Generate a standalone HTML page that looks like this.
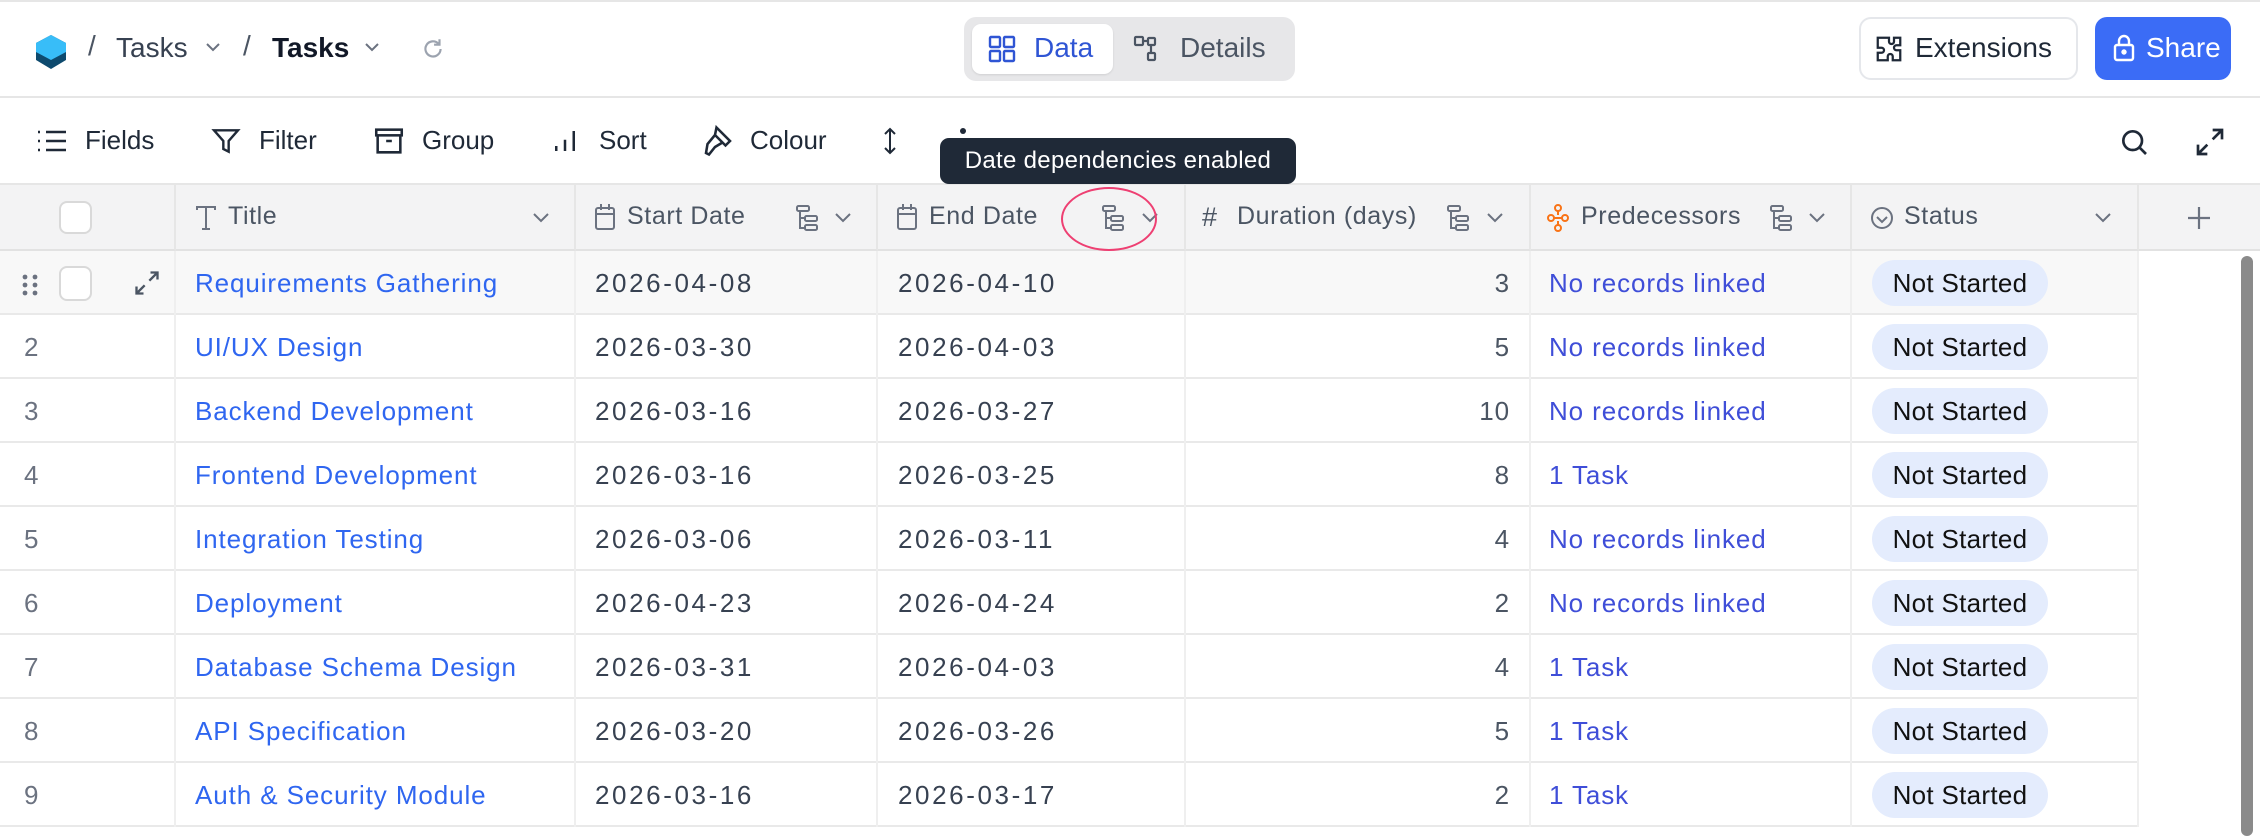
<!DOCTYPE html>
<html><head><meta charset="utf-8"><style>
*{box-sizing:border-box;margin:0;padding:0}
body{width:2260px;height:832px;overflow:hidden;background:#fff;font-family:"Liberation Sans",sans-serif;position:relative;color:#1f2937}
.a{position:absolute;white-space:nowrap}
.hl{position:absolute;left:0;width:2260px;height:2px;background:#e6e6e6}
.tb{font-size:26px;color:#1f2937;top:125px}
.ic{position:absolute}
.th{position:absolute;top:185px;height:66px;background:#f3f3f4;border-right:2px solid #e6e6e6;border-bottom:2px solid #e2e2e2}
.thl{position:absolute;top:202px;font-size:25px;color:#4b5563;letter-spacing:.6px}
.row{position:absolute;left:0;width:2139px;height:64px;border-bottom:2px solid #e9e9e9}
.cell{position:absolute;top:0;height:64px;border-right:2px solid #efefef}
.t{position:absolute;top:17px;font-size:26px;letter-spacing:.9px}
.num{color:#6b7280;left:24px}
.title{color:#2f66f0;left:195px}
.d{color:#374151;letter-spacing:2.6px}
.pred{color:#3f4ed8;left:1549px}
.pill{position:absolute;left:1872px;top:9px;width:176px;height:46px;border-radius:23px;background:#e4ecfd;font-size:26px;color:#111;text-align:center;line-height:46px;letter-spacing:.3px}
</style></head><body>
<div class="hl" style="top:0"></div>
<svg class="ic" style="left:34px;top:34px" width="34" height="36" viewBox="0 0 34 36"><path d="M17 1 L32 9 V26 L17 35 L2 26 V9Z" fill="#0e4a6e"/><path d="M17 1 L32 9 V18 L17 26 L2 18 V9Z" fill="#38bdf8"/></svg>
<div class="a" style="left:88px;top:30px;font-size:28px;color:#4b5563">/</div>
<div class="a" style="left:116px;top:32px;font-size:28px;color:#374151">Tasks</div>
<svg class="ic" style="left:205px;top:42px" width="16" height="10"><path d="M2 2l6 6 6-6" stroke="#6b7280" stroke-width="2" fill="none"/></svg>
<div class="a" style="left:243px;top:30px;font-size:28px;color:#4b5563">/</div>
<div class="a" style="left:272px;top:32px;font-size:28px;color:#111827;font-weight:bold">Tasks</div>
<svg class="ic" style="left:364px;top:42px" width="16" height="10"><path d="M2 2l6 6 6-6" stroke="#6b7280" stroke-width="2" fill="none"/></svg>
<svg class="ic" style="left:420px;top:36px" width="26" height="26" viewBox="0 0 24 24"><path d="M19 12a7 7 0 1 1-2-5" stroke="#9ca3af" stroke-width="2" fill="none"/><path d="M18 3v5h-5" stroke="#9ca3af" stroke-width="2" fill="none"/></svg>
<div class="a" style="left:964px;top:17px;width:331px;height:64px;background:#e7e7e9;border-radius:12px"></div>
<div class="a" style="left:972px;top:24px;width:141px;height:50px;background:#fff;border-radius:9px;box-shadow:0 1px 2px rgba(0,0,0,.1)"></div>
<svg class="ic" style="left:988px;top:35px" width="28" height="28" viewBox="0 0 28 28" fill="none" stroke="#2f55d4" stroke-width="2.4"><rect x="2" y="2" width="10" height="10" rx="1"/><rect x="16" y="2" width="10" height="10" rx="1"/><rect x="2" y="16" width="10" height="10" rx="1"/><rect x="16" y="16" width="10" height="10" rx="1"/></svg>
<div class="a" style="left:1034px;top:32px;font-size:28px;color:#2f55d4">Data</div>
<svg class="ic" style="left:1133px;top:35px" width="28" height="28" viewBox="0 0 28 28" fill="none" stroke="#4b5563" stroke-width="2.2"><rect x="2" y="2" width="8" height="8" rx="1"/><rect x="15" y="3" width="7" height="7" rx="1"/><rect x="15" y="18" width="7" height="7" rx="1"/><path d="M10 6h5M18 10v8"/></svg>
<div class="a" style="left:1180px;top:32px;font-size:28px;color:#4b5563">Details</div>
<div class="a" style="left:1859px;top:17px;width:219px;height:63px;border:2px solid #e5e7eb;border-radius:12px;background:#fff"></div>
<svg class="ic" style="left:1874px;top:34px" width="30" height="30" viewBox="0 0 24 24" fill="none" stroke="#1f2937" stroke-width="1.8"><path d="M9 3h3v3a2 2 0 1 0 4 0V3h5v6h-3a2 2 0 1 0 0 4h3v8h-6v-3a2 2 0 1 0-4 0v3H3v-6h3a2 2 0 1 0 0-4H3V3z"/></svg>
<div class="a" style="left:1915px;top:32px;font-size:28px;color:#1f2937">Extensions</div>
<div class="a" style="left:2095px;top:17px;width:136px;height:63px;background:#3b6cf6;border-radius:12px"></div>
<svg class="ic" style="left:2113px;top:34px" width="22" height="28" viewBox="0 0 22 28" fill="none" stroke="#fff" stroke-width="2.4"><rect x="2" y="11" width="18" height="15" rx="2"/><path d="M6 11V7a5 5 0 0 1 10 0v4"/><circle cx="11" cy="18" r="1.5" fill="#fff"/></svg>
<div class="a" style="left:2146px;top:32px;font-size:28px;color:#fff">Share</div>
<div class="hl" style="top:96px"></div>
<svg class="ic" style="left:36px;top:128px" width="32" height="26" viewBox="0 0 32 26" stroke="#1f2937" stroke-width="2.4"><path d="M2 4h2M10 4h20M2 13h2M10 13h20M2 22h2M10 22h20"/></svg>
<div class="a tb" style="left:85px">Fields</div>
<svg class="ic" style="left:210px;top:125px" width="32" height="32" viewBox="0 0 24 24" fill="none" stroke="#1f2937" stroke-width="1.8"><path d="M3 4h18l-7 8v8l-4-2v-6z"/></svg>
<div class="a tb" style="left:259px">Filter</div>
<svg class="ic" style="left:372px;top:124px" width="34" height="34" viewBox="0 0 24 24" fill="none" stroke="#1f2937" stroke-width="1.8"><rect x="3" y="4" width="18" height="4"/><path d="M4 8v12h16V8M10 12h4"/></svg>
<div class="a tb" style="left:422px">Group</div>
<svg class="ic" style="left:550px;top:126px" width="30" height="30" viewBox="0 0 24 24" stroke="#1f2937" stroke-width="2"><path d="M5 20v-4M12 20v-9M19 20V4"/></svg>
<div class="a tb" style="left:599px">Sort</div>
<svg class="ic" style="left:700px;top:123px" width="36" height="36" viewBox="0 0 24 24" fill="none" stroke="#1f2937" stroke-width="1.7"><path d="M11 3l9 9-3 3-7-7zM10 8l-5 6 -1 6 2 1 4-5 5-3"/></svg>
<div class="a tb" style="left:750px">Colour</div>
<svg class="ic" style="left:882px;top:126px" width="16" height="30" viewBox="0 0 16 30" stroke="#1f2937" stroke-width="2" fill="none"><path d="M8 3v24M3 8l5-5 5 5M3 22l5 5 5-5"/></svg>
<div class="a" style="left:960px;top:128px;width:6px;height:6px;border-radius:3px;background:#1f2937"></div>
<svg class="ic" style="left:2118px;top:126px" width="32" height="32" viewBox="0 0 24 24" fill="none" stroke="#1f2937" stroke-width="2"><circle cx="11" cy="11" r="7"/><path d="M16 16l5 5"/></svg>
<svg class="ic" style="left:2194px;top:126px" width="32" height="32" viewBox="0 0 24 24" fill="none" stroke="#1f2937" stroke-width="2"><path d="M14 3h7v7M21 3l-7 7M10 21H3v-7M3 21l7-7"/></svg>
<div class="hl" style="top:183px"></div>
<div class="th" style="left:0;width:176px"></div>
<div class="a" style="left:59px;top:201px;width:33px;height:33px;border:2px solid #d9d9d9;border-radius:8px;background:#fff"></div>
<div class="th" style="left:176px;width:400px"></div>
<div class="th" style="left:576px;width:302px"></div>
<div class="th" style="left:878px;width:308px"></div>
<div class="th" style="left:1186px;width:345px"></div>
<div class="th" style="left:1531px;width:321px"></div>
<div class="th" style="left:1852px;width:287px"></div>
<div class="th" style="left:2139px;width:121px;border-right:none"></div>
<svg class="ic" style="left:194px;top:205px" width="24" height="26" viewBox="0 0 24 26" stroke="#6b7280" stroke-width="2" fill="none"><path d="M3 5V2h18v3M12 2v22M8 24h8"/></svg>
<div class="thl" style="left:228px">Title</div>
<svg class="ic" style="left:532px;top:212px" width="18" height="12"><path d="M2 2l7 7 7-7" stroke="#6b7280" stroke-width="2" fill="none"/></svg>
<svg class="ic" style="left:594px;top:203px" width="22" height="28" viewBox="0 0 22 28" stroke="#6b7280" stroke-width="2" fill="none"><rect x="2" y="5" width="18" height="21" rx="2"/><path d="M2 11h18M7 1v6M15 1v6"/></svg>
<div class="thl" style="left:627px">Start Date</div>
<svg class="ic" style="left:795px;top:204px" width="26" height="28" viewBox="0 0 26 28" stroke="#6b7280" stroke-width="2" fill="none"><rect x="2" y="2" width="12" height="5" rx="1.5"/><rect x="10" y="12" width="12" height="5" rx="1.5"/><rect x="10" y="21" width="12" height="5" rx="1.5"/><path d="M5 7v17h5M5 14h5"/></svg>
<svg class="ic" style="left:834px;top:212px" width="18" height="12"><path d="M2 2l7 7 7-7" stroke="#6b7280" stroke-width="2" fill="none"/></svg>
<svg class="ic" style="left:896px;top:203px" width="22" height="28" viewBox="0 0 22 28" stroke="#6b7280" stroke-width="2" fill="none"><rect x="2" y="5" width="18" height="21" rx="2"/><path d="M2 11h18M7 1v6M15 1v6"/></svg>
<div class="thl" style="left:929px">End Date</div>
<svg class="ic" style="left:1101px;top:204px" width="26" height="28" viewBox="0 0 26 28" stroke="#6b7280" stroke-width="2" fill="none"><rect x="2" y="2" width="12" height="5" rx="1.5"/><rect x="10" y="12" width="12" height="5" rx="1.5"/><rect x="10" y="21" width="12" height="5" rx="1.5"/><path d="M5 7v17h5M5 14h5"/></svg>
<svg class="ic" style="left:1141px;top:212px" width="18" height="12"><path d="M2 2l7 7 7-7" stroke="#6b7280" stroke-width="2" fill="none"/></svg>
<div class="a" style="left:1061px;top:187px;width:96px;height:64px;border:2px solid #ee3f72;border-radius:50%"></div>
<div class="thl" style="left:1202px;font-size:27px">#</div>
<div class="thl" style="left:1237px">Duration (days)</div>
<svg class="ic" style="left:1446px;top:204px" width="26" height="28" viewBox="0 0 26 28" stroke="#6b7280" stroke-width="2" fill="none"><rect x="2" y="2" width="12" height="5" rx="1.5"/><rect x="10" y="12" width="12" height="5" rx="1.5"/><rect x="10" y="21" width="12" height="5" rx="1.5"/><path d="M5 7v17h5M5 14h5"/></svg>
<svg class="ic" style="left:1486px;top:212px" width="18" height="12"><path d="M2 2l7 7 7-7" stroke="#6b7280" stroke-width="2" fill="none"/></svg>
<svg class="ic" style="left:1546px;top:203px" width="24" height="30" viewBox="0 0 24 30" stroke="#f97316" stroke-width="2" fill="none"><circle cx="12" cy="5" r="3"/><circle cx="5" cy="15" r="3"/><circle cx="19" cy="15" r="3"/><circle cx="12" cy="25" r="3"/><path d="M8 15h8M12 8v4M12 18v4"/></svg>
<div class="thl" style="left:1581px">Predecessors</div>
<svg class="ic" style="left:1769px;top:204px" width="26" height="28" viewBox="0 0 26 28" stroke="#6b7280" stroke-width="2" fill="none"><rect x="2" y="2" width="12" height="5" rx="1.5"/><rect x="10" y="12" width="12" height="5" rx="1.5"/><rect x="10" y="21" width="12" height="5" rx="1.5"/><path d="M5 7v17h5M5 14h5"/></svg>
<svg class="ic" style="left:1808px;top:212px" width="18" height="12"><path d="M2 2l7 7 7-7" stroke="#6b7280" stroke-width="2" fill="none"/></svg>
<svg class="ic" style="left:1870px;top:206px" width="24" height="24" viewBox="0 0 24 24" stroke="#6b7280" stroke-width="2" fill="none"><circle cx="12" cy="12" r="10"/><path d="M7 11l5 5 5-5"/></svg>
<div class="thl" style="left:1904px">Status</div>
<svg class="ic" style="left:2094px;top:212px" width="18" height="12"><path d="M2 2l7 7 7-7" stroke="#6b7280" stroke-width="2" fill="none"/></svg>
<svg class="ic" style="left:2185px;top:204px" width="28" height="28" stroke="#6b7280" stroke-width="2.2"><path d="M14 3v22M3 14h22"/></svg>
<div class="a" style="left:940px;top:138px;width:356px;height:46px;background:#1f2937;border-radius:9px;color:#fff;font-size:24px;text-align:center;line-height:46px;letter-spacing:.3px">Date dependencies enabled</div>
<div class="row" style="top:251px;background:#f8f8f8">
<svg class="ic" style="left:22px;top:23px" width="16" height="22"><g fill="#6b7280"><circle cx="3" cy="3" r="2.4"/><circle cx="13" cy="3" r="2.4"/><circle cx="3" cy="11" r="2.4"/><circle cx="13" cy="11" r="2.4"/><circle cx="3" cy="19" r="2.4"/><circle cx="13" cy="19" r="2.4"/></g></svg>
<div class="a" style="left:59px;top:15px;width:33px;height:35px;border:2px solid #d9d9d9;border-radius:8px;background:#fff"></div>
<svg class="ic" style="left:133px;top:18px" width="28" height="28" viewBox="0 0 24 24" fill="none" stroke="#4b5563" stroke-width="2"><path d="M15 3h6v6M21 3l-7 7M9 21H3v-6M3 21l7-7"/></svg>
</div>
<div id="rows"></div>
<script>
const data=[["Requirements Gathering","2026-04-08","2026-04-10","3","No records linked"],
["UI/UX Design","2026-03-30","2026-04-03","5","No records linked"],
["Backend Development","2026-03-16","2026-03-27","10","No records linked"],
["Frontend Development","2026-03-16","2026-03-25","8","1 Task"],
["Integration Testing","2026-03-06","2026-03-11","4","No records linked"],
["Deployment","2026-04-23","2026-04-24","2","No records linked"],
["Database Schema Design","2026-03-31","2026-04-03","4","1 Task"],
["API Specification","2026-03-20","2026-03-26","5","1 Task"],
["Auth & Security Module","2026-03-16","2026-03-17","2","1 Task"]];
let h="";
data.forEach((r,i)=>{const top=251+i*64;
h+=`<div class="row" style="top:${top}px;${i==0?'background:transparent':''}">
<div class="cell" style="left:0;width:176px"></div><div class="cell" style="left:176px;width:400px"></div><div class="cell" style="left:576px;width:302px"></div><div class="cell" style="left:878px;width:308px"></div><div class="cell" style="left:1186px;width:345px"></div><div class="cell" style="left:1531px;width:321px"></div><div class="cell" style="left:1852px;width:287px"></div>
${i?`<div class="t num">${i+1}</div>`:''}
<div class="t title">${r[0].replace('&','&amp;')}</div>
<div class="t d" style="left:595px">${r[1]}</div>
<div class="t d" style="left:898px">${r[2]}</div>
<div class="t" style="right:${2139-1510}px;color:#4b5563">${r[3]}</div>
<div class="t pred">${r[4]}</div>
<div class="pill">Not Started</div></div>`;});
document.getElementById("rows").innerHTML=h;
</script>
<div class="a" style="left:2241px;top:256px;width:12px;height:580px;border-radius:6px;background:#8a8a8a"></div>
</body></html>
